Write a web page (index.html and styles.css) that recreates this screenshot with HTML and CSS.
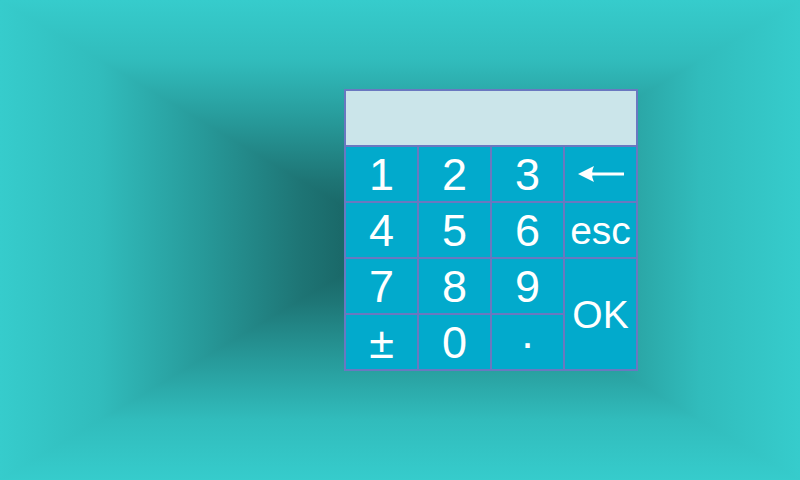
FILE: index.html
```html
<!DOCTYPE html>
<html lang="en">
<head>
<meta charset="utf-8">
<title>Keypad</title>
<link rel="stylesheet" href="styles.css">
</head>
<body>
<div class="screen">
  <div class="keypad">
    <div class="display"></div>
    <div class="key">1</div>
    <div class="key">2</div>
    <div class="key">3</div>
    <div class="key key-back" aria-label="backspace">
      <svg class="arrow" width="46" height="16" viewBox="0 0 46 16">
        <path d="M0 8 L16 0 Q13.5 6 14.5 6.5 L46 6.5 L46 9.5 L14.5 9.5 Q13.5 10 16 16 Z" fill="#ffffff"/>
      </svg>
    </div>
    <div class="key">4</div>
    <div class="key">5</div>
    <div class="key">6</div>
    <div class="key key-small">esc</div>
    <div class="key">7</div>
    <div class="key">8</div>
    <div class="key">9</div>
    <div class="key key-small key-ok">OK</div>
    <div class="key">±</div>
    <div class="key">0</div>
    <div class="key">·</div>
  </div>
</div>
</body>
</html>
```

FILE: styles.css
```css
html, body {
  margin: 0;
  padding: 0;
}

body {
  width: 800px;
  height: 480px;
  overflow: hidden;
  font-family: "Liberation Sans", Arial, sans-serif;
}

.screen {
  box-sizing: border-box;
  width: 800px;
  height: 480px;
  padding: 89px 0 0 344px;
  background:
    linear-gradient(to right, #36cccc 0%, #31bcbc 12.5%, #279a9a 25%, #1e7575 37.5%, #155858 50%, #1e7575 62.5%, #279a9a 75%, #31bcbc 87.5%, #36cccc 100%),
    linear-gradient(to bottom, #36cccc 0%, #31bcbc 12.5%, #279a9a 25%, #1e7575 37.5%, #155858 50%, #1e7575 62.5%, #279a9a 75%, #31bcbc 87.5%, #36cccc 100%);
  background-blend-mode: lighten;
}

.keypad {
  display: grid;
  grid-template-columns: repeat(4, 71px);
  grid-template-rows: repeat(5, 54px);
  gap: 2px;
  padding: 2px;
  width: max-content;
  background: #6a78c0;
}

.display {
  grid-column: 1 / -1;
  background: #cbe5ea;
}

.key {
  display: flex;
  align-items: center;
  justify-content: center;
  background: #02aacc;
  color: #ffffff;
  font-size: 45px;
  line-height: 1;
}

.key-small {
  font-size: 39px;
}

.key-ok {
  grid-column: 4;
  grid-row: 4 / span 2;
}

.arrow {
  display: block;
}
```
